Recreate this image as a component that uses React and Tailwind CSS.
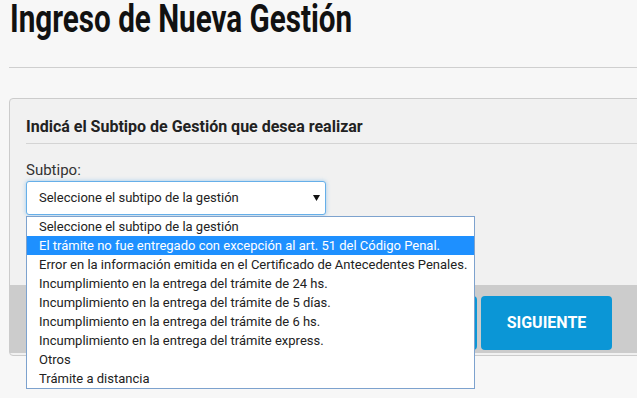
const options = [
  'Seleccione el subtipo de la gestión',
  'El trámite no fue entregado con excepción al art. 51 del Código Penal.',
  'Error en la información emitida en el Certificado de Antecedentes Penales.',
  'Incumplimiento en la entrega del trámite de 24 hs.',
  'Incumplimiento en la entrega del trámite de 5 días.',
  'Incumplimiento en la entrega del trámite de 6 hs.',
  'Incumplimiento en la entrega del trámite express.',
  'Otros',
  'Trámite a distancia',
];

export default function App() {
  return (
    <div className="h-[398px] w-[637px] overflow-hidden bg-[#f7f7f7] pt-px font-['Roboto',sans-serif] text-[#222]">
      <div className="-mt-[4px] pl-[10px]">
        <h1 className="inline-block origin-left scale-x-[0.78] whitespace-nowrap text-[38px] leading-[44px] font-bold text-[#111]">
          Ingreso de Nueva Gestión
        </h1>
      </div>

      <div className="ml-[9px] mt-[26px] w-[700px] border-t border-[#cfcfcf]" />

      <div className="ml-[9px] mt-[30px] w-[700px] rounded-[4px] border border-[#cccccc] bg-[#f1f1f1]">
        <div className="mx-4 border-b border-[#d4d4d4] pt-[18px] pb-[6px]">
          <h2 className="text-[16px] leading-[20px] font-bold text-[#222]">
            Indicá el Subtipo de Gestión que desea realizar
          </h2>
        </div>

        <div className="px-4 pt-4">
          <label className="block text-[15px] leading-[20px] text-[#333]">Subtipo:</label>
          <div className="relative mt-px w-[300px]">
            <div className="flex h-[34px] items-center justify-between rounded-[3px] border border-[#66afe9] bg-white pl-3 pr-[5px] shadow-[0_0_4px_rgba(102,175,233,0.6)]">
              <span className="text-[13px] text-[#222]">Seleccione el subtipo de la gestión</span>
              <svg width="7" height="6" viewBox="0 0 7 6">
                <polygon points="0,0 7,0 3.5,6" fill="#111" />
              </svg>
            </div>

            <ul className="absolute left-0 top-[35px] z-10 w-[449px] border border-[#7da2ce] bg-white">
              {options.map((o, i) => (
                <li
                  key={o}
                  className={
                    i === 1
                      ? 'h-[19px] whitespace-nowrap bg-[#1e90ff] pl-3 text-[13px] leading-[19px] text-white'
                      : 'h-[19px] whitespace-nowrap pl-3 text-[13px] leading-[19px] text-[#222]'
                  }
                >
                  {o}
                </li>
              ))}
            </ul>
          </div>
        </div>

        <div className="mt-[70px] mb-[2px] flex h-[68px] items-start gap-1 bg-[#cccccc] pl-[336px] pt-[11px]">
          <button className="h-[54px] w-[131px] rounded-[4px] bg-[#0b96d6] text-[16px] font-bold text-white">
            ANTERIOR
          </button>
          <button className="h-[54px] w-[131px] rounded-[4px] bg-[#0b96d6] text-[16px] font-bold text-white">
            SIGUIENTE
          </button>
        </div>
      </div>
    </div>
  );
}
